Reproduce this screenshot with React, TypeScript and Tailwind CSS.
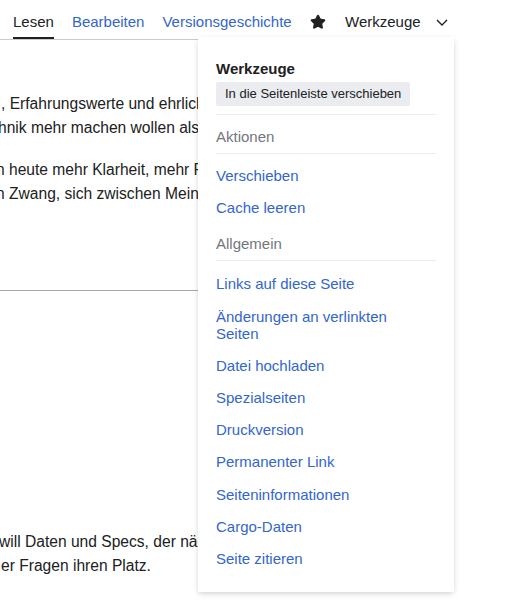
import { Star } from "lucide-react";

const aktionen = ["Verschieben", "Cache leeren"];
const allgemein = [
  "Links auf diese Seite",
  "Änderungen an verlinkten Seiten",
  "Datei hochladen",
  "Spezialseiten",
  "Druckversion",
  "Permanenter Link",
  "Seiteninformationen",
  "Cargo-Daten",
  "Seite zitieren",
];

function Chevron() {
  return (
    <svg width="12" height="7" viewBox="0 0 12 7" fill="none">
      <path d="M1 1l5 5 5-5" stroke="#202122" strokeWidth="1.4" />
    </svg>
  );
}

function MenuItem({ label }: { label: string }) {
  return (
    <li>
      <a href="#" className="block w-[190px] py-[7.6px] text-[15px] leading-[17px] text-[#36c]">
        {label}
      </a>
    </li>
  );
}

function ToolsMenu() {
  return (
    <div className="absolute left-[198px] top-[37px] w-[256px] bg-white px-[18px] pb-[17px] pt-[23px] shadow-[0_2px_6px_-1px_rgba(0,0,0,0.22)]">
      <div className="border-b border-[#eaecf0] pb-[8px]">
        <div className="text-[15px] font-bold leading-[17px]">Werkzeuge</div>
        <button className="mt-[5px] block rounded-[2px] bg-[#eaecf0] px-[9px] py-[4px] text-[13px] leading-[16px] text-[#202122]">
          In die Seitenleiste verschieben
        </button>
      </div>

      <div className="border-b border-[#eaecf0] pt-[13px] pb-[7.5px] text-[15px] leading-[17px] text-[#72777d]">
        Aktionen
      </div>
      <ul className="pt-[6px]">
        {aktionen.map((a) => (
          <MenuItem key={a} label={a} />
        ))}
      </ul>

      <div className="border-b border-[#eaecf0] pt-[11px] pb-[8.5px] text-[15px] leading-[17px] text-[#72777d]">
        Allgemein
      </div>
      <ul className="pt-[6.5px]">
        {allgemein.map((a) => (
          <MenuItem key={a} label={a} />
        ))}
      </ul>
    </div>
  );
}

export default function App() {
  return (
    <div className="relative h-[600px] w-[530px] overflow-hidden bg-white font-['Liberation_Sans',Arial,sans-serif] text-[#202122]">
      <div className="flex h-[40px] text-[15px] leading-[20px]">
        <div className="flex w-[300px] gap-[18px] border-b border-[#c8ccd1] pl-[13px]">
          <span className="flex items-center pt-[4px] shadow-[inset_0_-2px_0_#202122]">Lesen</span>
          <a href="#" className="flex items-center pt-[4px] text-[#36c]">Bearbeiten</a>
          <a href="#" className="flex items-center pt-[4px] text-[#36c]">Versionsgeschichte</a>
        </div>
        <div className="flex items-center pt-[4px]">
          <Star size={16} fill="#202122" stroke="#202122" className="ml-[10px]" />
          <span className="ml-[19px]">Werkzeuge</span>
          <span className="ml-[15px] flex">
            <Chevron />
          </span>
        </div>
      </div>

      <div className="w-[440px] overflow-hidden text-[15.6px] leading-[23.5px]">
        <p className="mt-[52px] whitespace-nowrap">
          <span className="ml-[1px] block">, Erfahrungswerte und ehrliche Meinungen zu finden,</span>
          <span className="-ml-[2px] block">hnik mehr machen wollen als nur Zahlen vergleichen.</span>
        </p>
        <p className="mt-[19px] whitespace-nowrap">
          <span className="-ml-[4px] block">n heute mehr Klarheit, mehr Fokus und weniger Lärm,</span>
          <span className="-ml-[4px] block">n Zwang, sich zwischen Meinungen zu verlieren.</span>
        </p>
        <div className="mt-[85px] h-px bg-[#a2a9b1]" />
        <p className="mt-[239px] whitespace-nowrap">
          <span className="-ml-[1px] block">will Daten und Specs, der nächste Erfahrungen,</span>
          <span className="ml-[1px] block">er Fragen ihren Platz.</span>
        </p>
      </div>

      <ToolsMenu />
    </div>
  );
}
